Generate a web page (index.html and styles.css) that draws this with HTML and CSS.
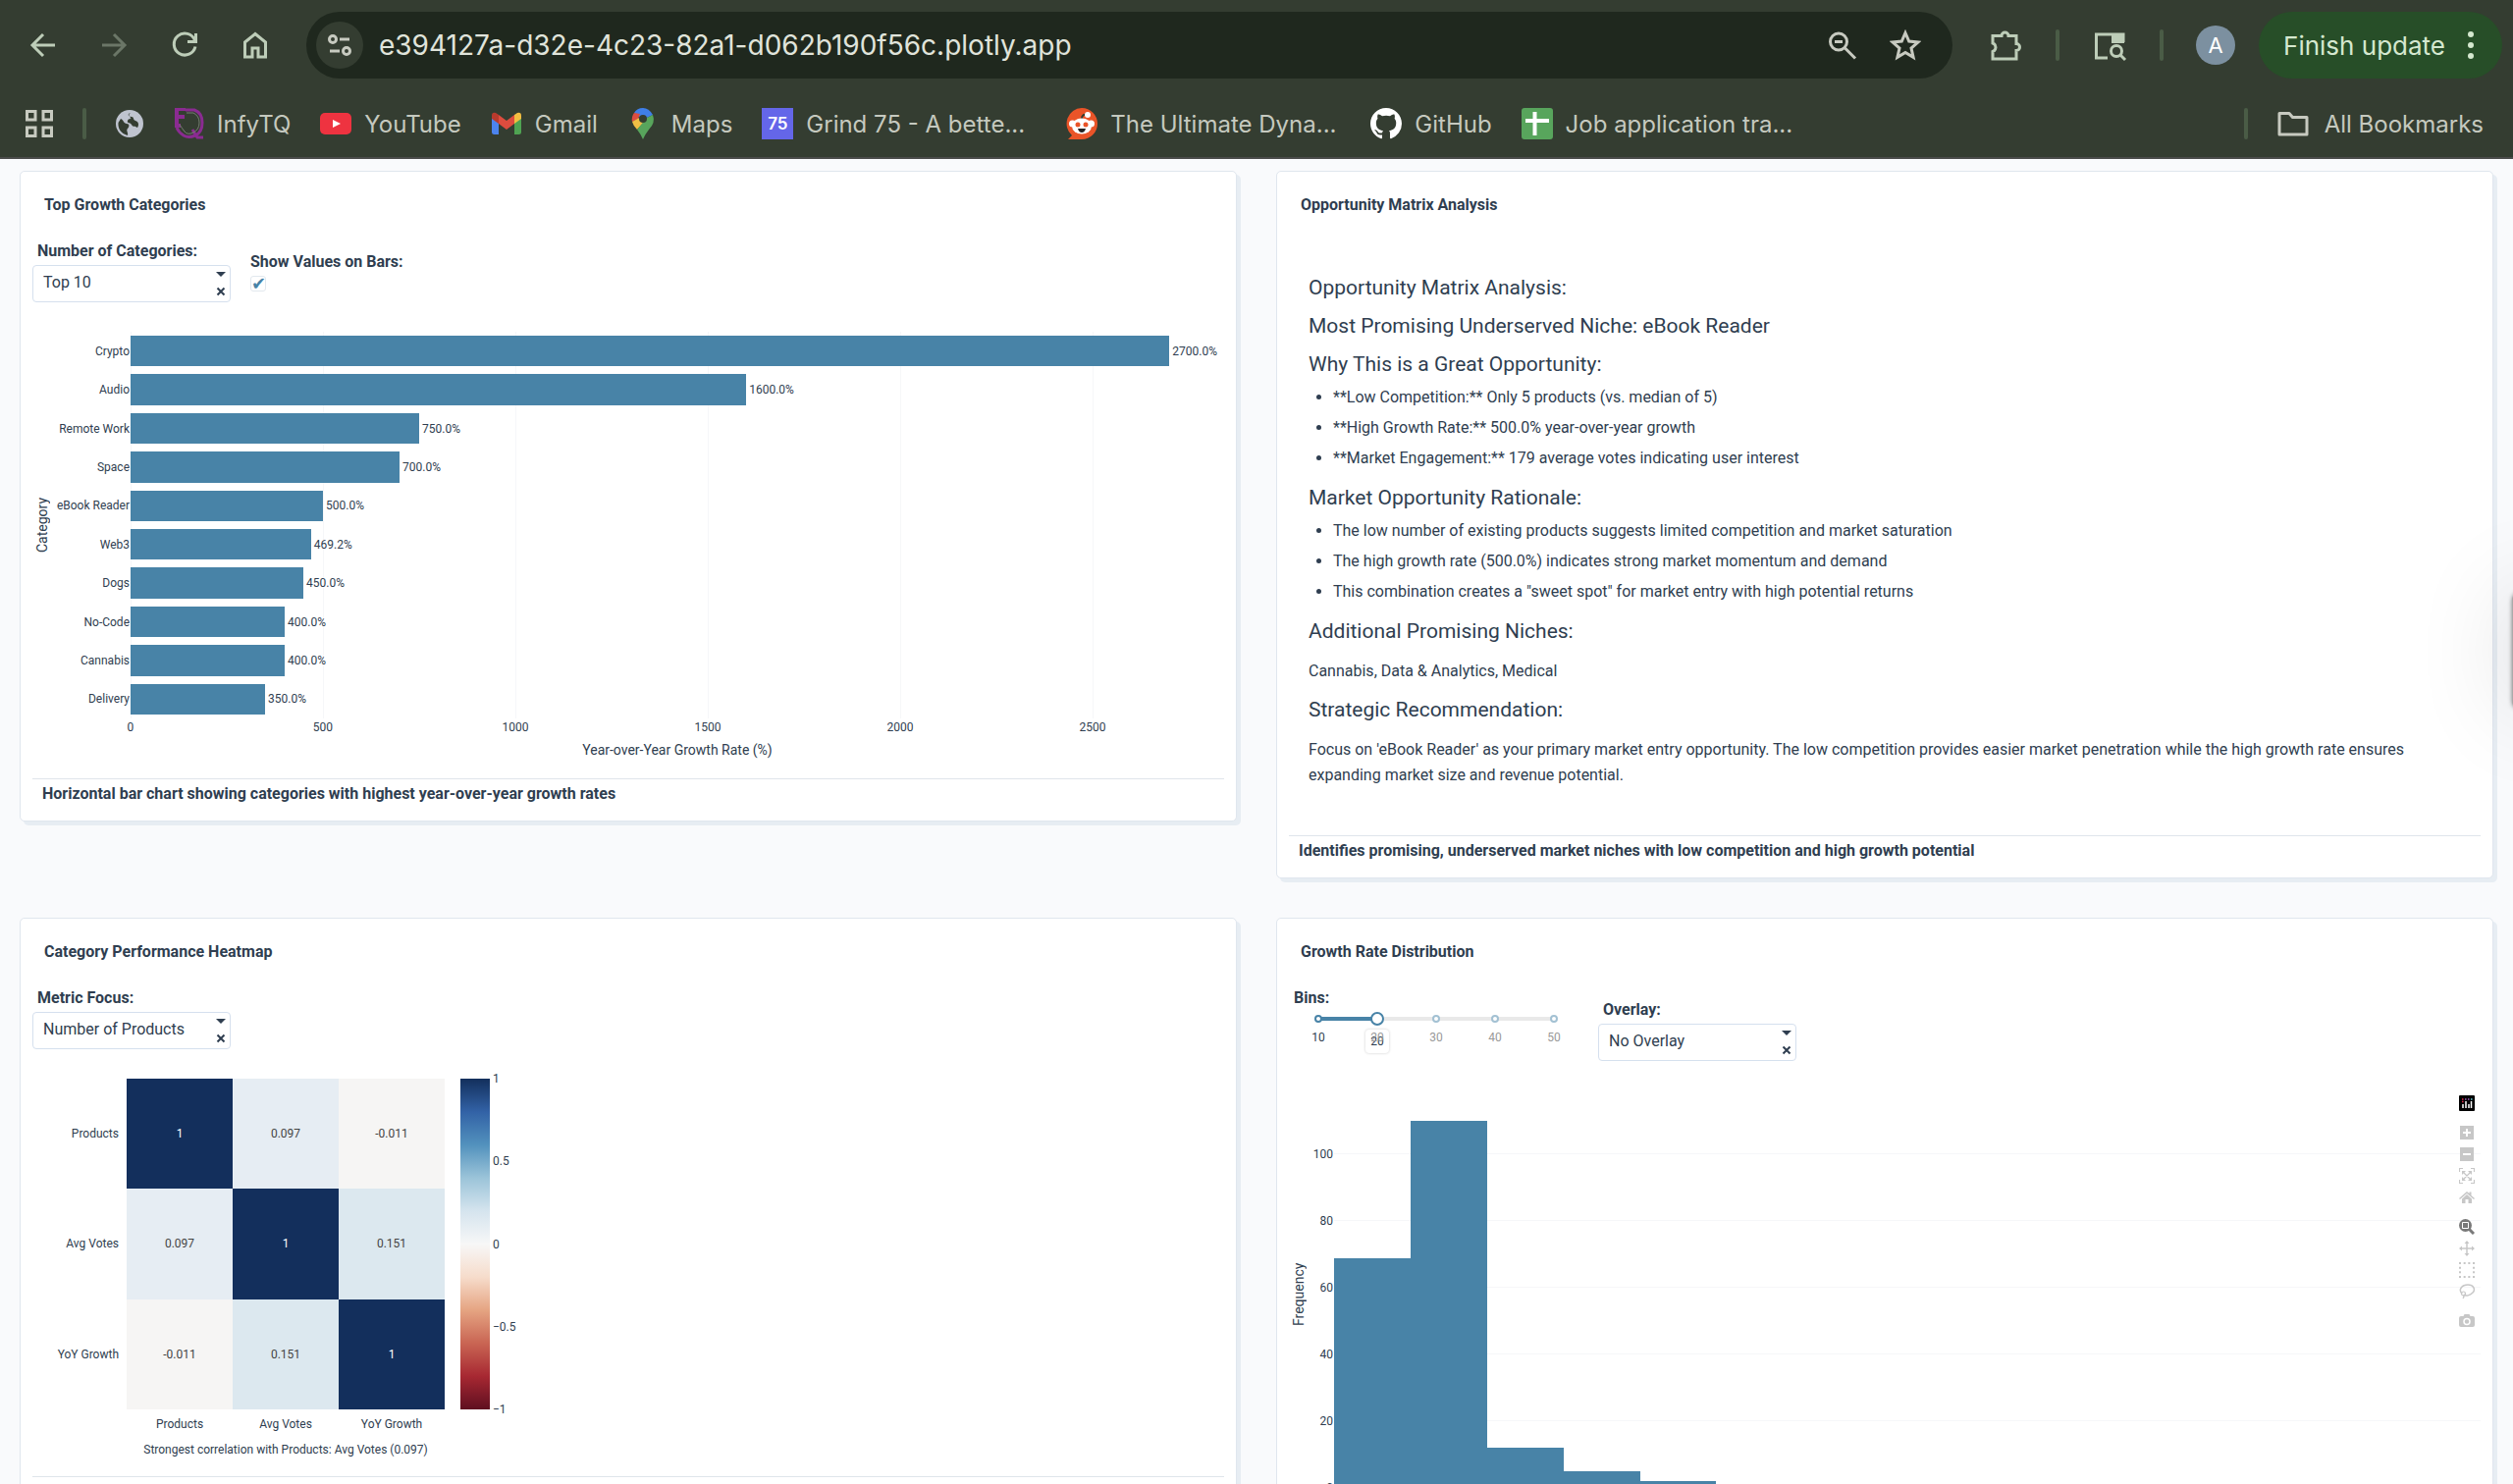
FILE: index.html
```html
<!DOCTYPE html>
<html lang="en">
<head>
    <meta charset="UTF-8">
    <meta name="viewport" content="width=device-width, initial-scale=1.0">
    <title>Product Analytics Dashboard</title>
    <link rel="stylesheet" href="styles.css">
</head>
<body>
    <header class="browser">
        <div class="toolbar">
            <nav class="nav-buttons">
                <button type="button" class="icon-btn" aria-label="Back"><svg viewBox="0 0 32 32" width="32" height="32"><path d="M28 16H5M16 5L5 16l11 11"/></svg></button>
                <button type="button" class="icon-btn dim" aria-label="Forward"><svg viewBox="0 0 32 32" width="32" height="32"><path d="M4 16h23M16 5l11 11-11 11"/></svg></button>
                <button type="button" class="icon-btn" aria-label="Reload"><svg viewBox="0 0 32 32" width="32" height="32"><path d="M26.500 11A11 11 0 1 0 27 17.500"/><path d="M27.500 4v8.500H19"/></svg></button>
                <button type="button" class="icon-btn" aria-label="Home"><svg viewBox="0 0 32 32" width="32" height="32"><path d="M5.500 13L16 4.500 26.500 13v15h-7.500v-9h-6v9H5.500z"/></svg></button>
            </nav>
            <div class="omnibox">
                <button type="button" class="site-info" aria-label="Site information"><svg viewBox="0 0 28 28" width="28" height="28"><circle cx="7" cy="8" r="3.500"/><path d="M14 8h10M4 20h10"/><circle cx="21" cy="20" r="3.500"/></svg></button>
                <input type="text" class="address" aria-label="Address" value="e394127a-d32e-4c23-82a1-d062b190f56c.plotly.app">
                <button type="button" class="icon-btn pale" aria-label="Zoom"><svg viewBox="0 0 32 32" width="32" height="32"><circle cx="12" cy="12.500" r="8.500"/><path d="M18.500 19l10.500 10.500M8 12.500h8"/></svg></button>
                <button type="button" class="icon-btn pale" aria-label="Bookmark this tab"><svg viewBox="0 0 32 32" width="32" height="32"><path d="M16 3.500l3.700 8.600 9.300.8-7 6.200 2.100 9.200-8.100-4.900-8.100 4.900L10 19.100l-7-6.200 9.300-.8z"/></svg></button>
            </div>
            <div class="tools">
                <button type="button" class="icon-btn" aria-label="Extensions"><svg viewBox="0 0 36 36" width="36" height="36"><path d="M5 8.500h9a3.500 3.500 0 1 1 7 0h8v8a3.500 3.500 0 1 1 0 7V32H5v-7.500a4.500 4.500 0 0 0 0-8.500z"/></svg></button>
                <span class="bar-divider"></span>
                <button type="button" class="icon-btn" aria-label="Search side panel"><svg viewBox="0 0 36 36" width="36" height="36"><path d="M16 31H4.500V7H32v8"/><path d="M20 6h13v10H20z" class="solid"/><circle cx="25" cy="24" r="5.500"/><path d="M29 28l5 5"/></svg></button>
                <span class="bar-divider"></span>
                <button type="button" class="avatar" aria-label="Profile">A</button>
                <button type="button" class="update">Finish update<svg viewBox="0 0 8 28" width="8" height="28"><circle cx="4" cy="3" r="3"/><circle cx="4" cy="14" r="3"/><circle cx="4" cy="25" r="3"/></svg></button>
            </div>
        </div>
        <nav class="bookmarks">
            <a href="#" class="bookmark" aria-label="Apps"><svg viewBox="0 0 28 28" width="28" height="28" class="line"><path d="M1.500 1.500h8.500V10H1.500zM18 1.500h8.500V10H18zM1.500 18h8.500v8.500H1.500zM18 18h8.500v8.500H18z"/></svg></a>
            <span class="bar-divider"></span>
            <a href="#" class="bookmark" aria-label="Website"><svg viewBox="0 0 28 28" width="28" height="28"><circle cx="14" cy="14" r="14" fill="#bfc4cf"/><path d="M5 9c3 1 3 5 6 5s3 3 1 5 1 4 0 7C5 24 2 19 2.500 13zM15 3c-4 1-2 4 1 4s1 3 4 4 4 4 2 7c-3-2-4 0-6-3s-5-1-4-4 4-1 3-3-3-3 0-5z" fill="#343d31"/></svg></a>
            <a href="#" class="bookmark"><svg viewBox="0 0 32 32" width="32" height="32"><path d="M2 1h11M4 1v17M2 18h6M4 9h8" stroke="#8a2b91" stroke-width="4" fill="none"/><path d="M13 2h9q8 3 8 13t-7 13-12 0-7-8" stroke="#8a2b91" stroke-width="3" fill="none"/><path d="M20 22l5 8h6" stroke="#8a2b91" stroke-width="3" fill="none"/><path d="M14 5h7q6 3 6 10t-6 10-9-1-5-7" stroke="#777c73" stroke-width="1" fill="none"/></svg>InfyTQ</a>
            <a href="#" class="bookmark"><svg viewBox="0 0 32 32" width="32" height="32"><rect y="5" width="32" height="22" rx="5" fill="#ee3340"/><path d="M13 12l8 4-8 4z" fill="#fff"/></svg>YouTube</a>
            <a href="#" class="bookmark"><svg viewBox="0 0 32 32" width="32" height="32"><path d="M1 9l7 5v13H3.500Q1 27 1 25z" fill="#4c84ee"/><path d="M31 9l-7 5v13h4.500Q31 27 31 25z" fill="#4fa352"/><path d="M24 7l3-2q4-1 4 3v3l-7 5z" fill="#f2bd41"/><path d="M1 11V8q0-4 4-3l3 2v9z" fill="#b93a2d"/><path d="M8 7l8 6 8-6v9l-8 6-8-6z" fill="#dd4c3e"/></svg>Gmail</a>
            <a href="#" class="bookmark"><svg viewBox="0 0 32 32" width="32" height="32"><path d="M7 5Q10 0 16 0t10 7L16 12z" fill="#3f7fe8"/><path d="M7 5Q4 9 5 14l6-3 2-5z" fill="#dc4c41"/><path d="M5 14q1 4 5 8l9-10-5-3z" fill="#f0bf45"/><path d="M26 7q3 8-4 15-4 5-6 10-2-5-6-10l10-12z" fill="#58a55c"/><circle cx="16" cy="11" r="4" fill="#343d31"/></svg>Maps</a>
            <a href="#" class="bookmark cut"><span class="badge75">75</span>Grind 75 - A bette...</a>
            <a href="#" class="bookmark cut"><svg viewBox="0 0 32 32" width="32" height="32"><path d="M16 0a16 16 0 1 1 0 32H2l4-4A16 16 0 0 1 16 0z" fill="#ea5428"/><path d="M16 11q0-5 5-4" stroke="#343d31" stroke-width="2" fill="none"/><circle cx="22" cy="7" r="3" fill="#fff"/><circle cx="6.500" cy="16" r="3.500" fill="#fff"/><circle cx="25.500" cy="16" r="3.500" fill="#fff"/><ellipse cx="16" cy="18.500" rx="10" ry="8" fill="#fff"/><circle cx="12" cy="17" r="2.500" fill="#ea5428"/><circle cx="20" cy="17" r="2.500" fill="#ea5428"/><path d="M12 21h8q-1 4-4 4t-4-4z" fill="#222"/></svg>The Ultimate Dyna...</a>
            <a href="#" class="bookmark"><svg viewBox="0 0 16 16" width="32" height="32"><path fill="#fff" d="M8 0C3.580 0 0 3.580 0 8c0 3.540 2.290 6.530 5.470 7.590.4.070.55-.17.55-.38 0-.19-.01-.82-.01-1.490-2.010.37-2.530-.49-2.690-.94-.09-.23-.48-.94-.82-1.130-.28-.15-.68-.52-.01-.53.63-.01 1.080.58 1.230.82.72 1.210 1.870.87 2.330.66.070-.52.28-.87.51-1.070-1.780-.2-3.640-.89-3.640-3.950 0-.87.31-1.590.82-2.150-.08-.2-.36-1.020.08-2.120 0 0 .67-.21 2.200.82.64-.18 1.320-.27 2-.27s1.360.09 2 .27c1.530-1.040 2.200-.82 2.200-.82.44 1.100.16 1.920.08 2.120.51.56.82 1.270.82 2.150 0 3.070-1.870 3.750-3.650 3.950.29.25.54.73.54 1.480 0 1.070-.01 1.930-.01 2.200 0 .21.15.46.55.38A8.010 8.010 0 0 0 16 8c0-4.420-3.580-8-8-8z"/></svg>GitHub</a>
            <a href="#" class="bookmark cut"><svg viewBox="0 0 32 32" width="32" height="32"><rect width="32" height="32" rx="3" fill="#58a55c"/><path d="M13.500 4v24M4 13h24" stroke="#fff" stroke-width="4"/></svg>Job application tra...</a>
            <span class="bar-divider push"></span>
            <a href="#" class="bookmark folder"><svg viewBox="0 0 32 32" width="32" height="32" class="line"><path d="M2 5.500h10l3.500 4H30V27H2z" stroke-linejoin="round"/></svg>All Bookmarks</a>
        </nav>
    </header>

    <main class="dashboard">
        <!-- Top growth categories -->
        <section class="card">
            <h2 class="card-title">Top Growth Categories</h2>
            <div class="controls">
                <div class="control">
                    <label for="top-n">Number of Categories:</label>
                    <div class="dropdown">
                        <select id="top-n"><option>Top 10</option></select>
                        <svg class="dropdown-icons" viewBox="0 0 10 28" width="10" height="28"><path d="M0 1h10L5 6z" class="caret"/><path d="M1.500 17.500l7 7m0-7l-7 7" class="cross"/></svg>
                    </div>
                </div>
                <div class="control">
                    <label for="show-values">Show Values on Bars:</label>
                    <input type="checkbox" id="show-values" class="check" checked>
                </div>
            </div>
            <div class="bar-chart">
                <div class="y-title">Category</div>
                <div class="bar-names">
                    <span>Crypto</span><span>Audio</span><span>Remote Work</span><span>Space</span><span>eBook Reader</span><span>Web3</span><span>Dogs</span><span>No-Code</span><span>Cannabis</span><span>Delivery</span>
                </div>
                <div class="bar-plot">
                    <div class="bar-row"><div class="bar" style="width:95%"></div>2700.0%</div>
                    <div class="bar-row"><div class="bar" style="width:56.3%"></div>1600.0%</div>
                    <div class="bar-row"><div class="bar" style="width:26.4%"></div>750.0%</div>
                    <div class="bar-row"><div class="bar" style="width:24.6%"></div>700.0%</div>
                    <div class="bar-row"><div class="bar" style="width:17.6%"></div>500.0%</div>
                    <div class="bar-row"><div class="bar" style="width:16.5%"></div>469.2%</div>
                    <div class="bar-row"><div class="bar" style="width:15.8%"></div>450.0%</div>
                    <div class="bar-row"><div class="bar" style="width:14.1%"></div>400.0%</div>
                    <div class="bar-row"><div class="bar" style="width:14.1%"></div>400.0%</div>
                    <div class="bar-row"><div class="bar" style="width:12.3%"></div>350.0%</div>
                </div>
                <div class="x-ticks"><span>0</span><span>500</span><span>1000</span><span>1500</span><span>2000</span><span>2500</span></div>
                <div class="x-title">Year-over-Year Growth Rate (%)</div>
            </div>
            <p class="card-note">Horizontal bar chart showing categories with highest year-over-year growth rates</p>
        </section>

        <!-- Opportunity matrix -->
        <section class="card">
            <h2 class="card-title">Opportunity Matrix Analysis</h2>
            <div class="analysis">
                <h3>Opportunity Matrix Analysis:</h3>
                <h3>Most Promising Underserved Niche: eBook Reader</h3>
                <h3>Why This is a Great Opportunity:</h3>
                <ul>
                    <li>**Low Competition:** Only 5 products (vs. median of 5)</li>
                    <li>**High Growth Rate:** 500.0% year-over-year growth</li>
                    <li>**Market Engagement:** 179 average votes indicating user interest</li>
                </ul>
                <h3>Market Opportunity Rationale:</h3>
                <ul>
                    <li>The low number of existing products suggests limited competition and market saturation</li>
                    <li>The high growth rate (500.0%) indicates strong market momentum and demand</li>
                    <li>This combination creates a "sweet spot" for market entry with high potential returns</li>
                </ul>
                <h3>Additional Promising Niches:</h3>
                <p>Cannabis, Data &amp; Analytics, Medical</p>
                <h3>Strategic Recommendation:</h3>
                <p>Focus on 'eBook Reader' as your primary market entry opportunity. The low competition provides easier market penetration while the high growth rate ensures expanding market size and revenue potential.</p>
            </div>
            <p class="card-note">Identifies promising, underserved market niches with low competition and high growth potential</p>
        </section>

        <!-- Correlation heatmap -->
        <section class="card">
            <h2 class="card-title">Category Performance Heatmap</h2>
            <div class="controls">
                <div class="control">
                    <label for="metric">Metric Focus:</label>
                    <div class="dropdown">
                        <select id="metric"><option>Number of Products</option></select>
                        <svg class="dropdown-icons" viewBox="0 0 10 28" width="10" height="28"><path d="M0 1h10L5 6z" class="caret"/><path d="M1.500 17.500l7 7m0-7l-7 7" class="cross"/></svg>
                    </div>
                </div>
            </div>
            <div class="heatmap">
                <div class="heat-y"><span>Products</span><span>Avg Votes</span><span>YoY Growth</span></div>
                <div class="heat-cells">
                    <span class="full">1</span><span class="low">0.097</span><span class="none">-0.011</span>
                    <span class="low">0.097</span><span class="full">1</span><span class="mid">0.151</span>
                    <span class="none">-0.011</span><span class="mid">0.151</span><span class="full">1</span>
                </div>
                <div class="colorbar"></div>
                <div class="colorbar-ticks"><span>1</span><span>0.5</span><span>0</span><span>−0.5</span><span>−1</span></div>
                <div class="heat-x"><span>Products</span><span>Avg Votes</span><span>YoY Growth</span></div>
                <div class="heat-note">Strongest correlation with Products: Avg Votes (0.097)</div>
            </div>
            <p class="card-note"></p>
        </section>

        <!-- Growth rate histogram -->
        <section class="card">
            <h2 class="card-title">Growth Rate Distribution</h2>
            <div class="controls">
                <div class="control bins">
                    <label for="bins">Bins:</label>
                    <div class="slider">
                        <div class="slider-dots"><i class="on"></i><i class="on"></i><i></i><i></i><i></i></div>
                        <input type="range" id="bins" min="10" max="50" step="10" value="20">
                        <output class="slider-tip" for="bins">20</output>
                        <div class="slider-marks"><span class="on">10</span><span>20</span><span>30</span><span>40</span><span>50</span></div>
                    </div>
                </div>
                <div class="control">
                    <label for="overlay">Overlay:</label>
                    <div class="dropdown">
                        <select id="overlay"><option>No Overlay</option></select>
                        <svg class="dropdown-icons" viewBox="0 0 10 28" width="10" height="28"><path d="M0 1h10L5 6z" class="caret"/><path d="M1.500 17.500l7 7m0-7l-7 7" class="cross"/></svg>
                    </div>
                </div>
            </div>
            <div class="histogram">
                <div class="y-title">Frequency</div>
                <div class="hist-ticks"><span>100</span><span>80</span><span>60</span><span>40</span><span>20</span><span>0</span></div>
                <div class="hist-plot">
                    <div class="hist-bar" style="height:234px"></div>
                    <div class="hist-bar" style="height:374px"></div>
                    <div class="hist-bar" style="height:41px"></div>
                    <div class="hist-bar" style="height:17px"></div>
                    <div class="hist-bar" style="height:7px"></div>
                </div>
                <div class="modebar">
                    <div class="mode-group"><a href="#" aria-label="Produced with Plotly"><svg viewBox="0 0 16 16" width="16" height="16"><rect width="16" height="16" rx="1" fill="#000"/><path d="M4 9v4M7 6v7M10 9v4M12.500 6v7" stroke="#fff" stroke-width="1.500"/><path d="M3 4h1.500M3 6.500h1.500" stroke="#e6294b" stroke-width="1.300"/><path d="M6 4h1.500M9 4h1.500" stroke="#a05cc0" stroke-width="1.300"/><path d="M12 4h1.500" stroke="#6fd3e0" stroke-width="1.300"/></svg></a></div>
                    <div class="mode-group">
                        <button type="button" aria-label="Zoom in"><svg viewBox="0 0 16 16" width="16" height="16"><path d="M1 1h14v14H1z"/><path d="M8 4v8M4 8h8" stroke="#fff" stroke-width="2"/></svg></button>
                        <button type="button" aria-label="Zoom out"><svg viewBox="0 0 16 16" width="16" height="16"><path d="M1 1h14v14H1z"/><path d="M4 8h8" stroke="#fff" stroke-width="2"/></svg></button>
                        <button type="button" aria-label="Autoscale"><svg viewBox="0 0 16 16" width="16" height="16"><path d="M.5 4V.5H4M12 .5h3.500V4M15.500 12v3.500H12M4 15.500H.5V12M4 4l8 8M12 4l-8 8" fill="none" stroke="#c7c7c7" stroke-width="1.200"/><path d="M3 3h4L3 7zM13 3v4L9 3zM3 13V9l4 4zM13 13H9l4-4z"/></svg></button>
                        <button type="button" aria-label="Reset axes"><svg viewBox="0 0 16 16" width="16" height="16"><path d="M8 2l2.500 2V2.500h2v3.500L16 9l-1 1-7-6-7 6-1-1zM8 5l5 4.500V14H9.500v-4h-3v4H3V9.500z"/></svg></button>
                    </div>
                    <div class="mode-group">
                        <button type="button" class="active" aria-label="Zoom"><svg viewBox="0 0 16 16" width="16" height="16"><circle cx="6.500" cy="6.500" r="6.500"/><path d="M10 10l5 5" stroke="#797979" stroke-width="3"/><path d="M3.500 3.500h6v6h-6z" stroke="#fff"/></svg></button>
                        <button type="button" aria-label="Pan"><svg viewBox="0 0 16 16" width="16" height="16"><path d="M8 1v14M1 8h14" stroke="#c7c7c7" stroke-width="1.500"/><path d="M8 0l2.500 3h-5zM8 16l-2.500-3h5zM0 8l3-2.500v5zM16 8l-3 2.500v-5z"/></svg></button>
                        <button type="button" aria-label="Box select"><svg viewBox="0 0 16 16" width="16" height="16"><path d="M1 1h14v14H1z" fill="none" stroke="#c7c7c7" stroke-width="2" stroke-dasharray="2 2.667" stroke-dashoffset="1"/></svg></button>
                        <button type="button" aria-label="Lasso select"><svg viewBox="0 0 16 16" width="16" height="16"><path d="M3 10C-1 6 3 1 9 1s8 5 5 8-7 4-9 2" fill="none" stroke="#c7c7c7" stroke-width="1.500"/><circle cx="4.500" cy="10" r="2" fill="none" stroke="#c7c7c7" stroke-width="1.200"/><path d="M4 12q2 0 0 3" fill="none" stroke="#c7c7c7" stroke-width="1.300"/></svg></button>
                    </div>
                    <div class="mode-group"><button type="button" aria-label="Download plot"><svg viewBox="0 0 16 16" width="16" height="16"><path d="M2 3h2.500l1-2h5l1 2H14q2 0 2 2v7q0 2-2 2H2q-2 0-2-2V5q0-2 2-2z"/><circle cx="8" cy="8.500" r="3" fill="#c7c7c7" stroke="#fff" stroke-width="1.500"/></svg></button></div>
                </div>
            </div>
        </section>
    </main>
    <div class="edge-panel"></div>
</body>
</html>
```
FILE: styles.css
```css
* {
    box-sizing: border-box;
}

body {
    margin: 0;
    height: 100vh;
    overflow: hidden;
    position: relative;
    background: #f9fafc;
    color: #2f3e50;
    font-family: Roboto, "Open Sans", sans-serif;
    font-size: 16px;
}

button, input, select {
    font: inherit;
    color: inherit;
}

button {
    background: none;
    border: none;
    padding: 0;
}

svg {
    display: block;
    flex: none;
}

/* Browser bar */
.browser {
    height: 162px;
    background: #343d31;
    border-bottom: 2px solid #4a4b4a;
    font-family: Inter, "Liberation Sans", sans-serif;
    color: #c5c9bf;
}

.toolbar {
    display: flex;
    align-items: center;
    height: 92px;
    padding: 0 11px 0 28px;
}

.nav-buttons {
    display: flex;
    gap: 40px;
    margin-right: 36px;
}

.icon-btn svg, .site-info svg, .line {
    fill: none;
    stroke: #bdcdb8;
    stroke-width: 3;
}

.icon-btn .solid {
    fill: #bdcdb8;
    stroke: none;
}

.dim {
    opacity: 0.4;
}

.icon-btn.pale svg, .line, .site-info svg {
    stroke: #c7cac0;
}

.omnibox {
    flex: 1;
    display: flex;
    align-items: center;
    gap: 32px;
    height: 68px;
    padding: 0 32px 0 10px;
    border-radius: 34px;
    background: #1f281e;
}

.site-info {
    width: 48px;
    height: 48px;
    border-radius: 50%;
    background: #343d31;
    display: flex;
    align-items: center;
    justify-content: center;
}

.address {
    flex: 1;
    margin-left: -16px;
    padding: 0;
    border: none;
    background: none;
    color: #e0e4db;
    font-size: 28px;
}

.tools {
    display: flex;
    align-items: center;
    margin-left: 36px;
    gap: 33px;
}

.bar-divider {
    width: 4px;
    height: 32px;
    border-radius: 2px;
    background: #4a5c46;
}

.avatar {
    width: 40px;
    height: 40px;
    border-radius: 50%;
    background: #7c90a0;
    color: #fff;
    font-size: 22px;
}

.update {
    display: flex;
    align-items: center;
    gap: 22px;
    height: 68px;
    margin-left: -9px;
    padding: 0 28px 0 25px;
    border-radius: 34px;
    background: #274e28;
    color: #d5e8cf;
    font-size: 26px;
}

.update svg {
    fill: #d5e8cf;
}

.bookmarks {
    display: flex;
    align-items: center;
    gap: 30px;
    height: 68px;
    padding: 0 30px 0 26px;
    font-size: 24px;
}

.bookmark {
    display: flex;
    align-items: center;
    gap: 13px;
    color: inherit;
    text-decoration: none;
    white-space: nowrap;
}

/* long names are cut to one shared width */
.cut {
    width: 280px;
}

.badge75 {
    width: 32px;
    height: 32px;
    background: #6466e9;
    color: #fff;
    font-size: 17px;
    font-weight: 600;
    line-height: 32px;
    text-align: center;
}

.push {
    margin-left: auto;
}

.folder {
    gap: 16px;
}

/* Dashboard */
.dashboard {
    display: grid;
    grid-template-columns: 1fr 1fr;
    align-items: start;
    gap: 40px;
    padding: 12px 20px;
}

.card {
    padding: 12px;
    background: #fff;
    border: 1px solid #e0e6ee;
    border-radius: 5px;
    box-shadow: 4px 4px 0 #e7edf3;
}

.card-title {
    margin: 0;
    padding: 12px;
    font-size: 16px;
    font-weight: 700;
    line-height: 20px;
}

.card-note {
    margin: 0;
    padding: 5px 10px;
    min-height: 31px;
    border-top: 1px solid #dfe5eb;
    font-weight: 700;
    line-height: 20px;
}

.controls {
    display: flex;
    align-items: center;
    gap: 20px;
    margin: 15px 0 30px;
}

.control {
    display: flex;
    flex-direction: column;
    gap: 4px;
}

.control label {
    font-weight: 700;
    line-height: 20px;
}

.dropdown {
    position: relative;
    width: 202px;
}

.dropdown select {
    display: block;
    width: 100%;
    height: 38px;
    padding: 0 10px 3px;
    appearance: none;
    background: #fff;
    border: 1px solid #d5e0ee;
    border-radius: 4px;
}

.control:has(.dropdown) label {
    padding-left: 5px;
}

.dropdown-icons {
    position: absolute;
    right: 5px;
    top: 6px;
    pointer-events: none;
}

.caret {
    fill: #2f3e50;
}

.cross {
    fill: none;
    stroke: #2f3e50;
    stroke-width: 2;
}

.check {
    appearance: none;
    width: 16px;
    height: 16px;
    margin: 0;
    border: 1px solid #e2e8ee;
    border-radius: 3px;
    color: #4883a7;
}

.check:checked::before {
    content: "✔";
    display: block;
    font: 18px/14px "DejaVu Sans", sans-serif;
}

/* Opportunity text */
.analysis {
    padding: 36px 20px 48px;
    line-height: 26px;
}

.analysis h3 {
    margin: 13px 0;
    font-size: 21px;
    font-weight: 400;
}

.analysis ul {
    display: grid;
    gap: 5px;
    margin: -5px 0 14px;
    padding-left: 25px;
}

.analysis p {
    margin: 15px 0 0;
}

/* Charts */
.y-title {
    writing-mode: vertical-rl;
    transform: rotate(180deg);
    text-align: center;
    font-size: 14px;
    line-height: 20px;
}

.bar-chart {
    display: grid;
    grid-template-columns: 20px 80px 1fr;
    grid-template-rows: 394px 18px 28px;
    font-size: 12px;
    margin-bottom: 15px;
}

.bar-names {
    display: flex;
    flex-direction: column;
    padding-right: 1px;
    text-align: right;
    white-space: nowrap;
}

.bar-names span {
    flex: 1;
    display: flex;
    align-items: center;
    justify-content: flex-end;
}

.bar-plot {
    display: flex;
    flex-direction: column;
    background: repeating-linear-gradient(90deg, #f6f7f9 0 1px, transparent 1px 17.593%);
}

.bar-row {
    flex: 1;
    display: flex;
    align-items: center;
    gap: 3px;
}

.bar {
    height: 80%;
    flex: none;
    background: #4883a7;
}

.x-ticks {
    grid-column: 3;
    display: grid;
    grid-template-columns: repeat(6, 17.593%);
    line-height: 18px;
    text-align: center;
}

/* each label is centred on its gridline */
.x-ticks span {
    transform: translateX(-50%);
}

.x-title {
    grid-column: 3;
    text-align: center;
    font-size: 14px;
    line-height: 28px;
}

.heatmap {
    display: grid;
    grid-template-columns: 96px 324px 46px auto;
    grid-template-rows: 337px 30px 22px;
    font-size: 12px;
    margin-bottom: 16px;
}

.heat-y {
    display: flex;
    flex-direction: column;
    padding-right: 8px;
}

.heat-y span {
    flex: 1;
    display: flex;
    align-items: center;
    justify-content: flex-end;
}

.heat-cells {
    display: grid;
    grid-template-columns: repeat(3, 1fr);
    color: #444;
}

.heat-cells span {
    display: flex;
    align-items: center;
    justify-content: center;
}

.heat-cells .full {
    background: #132f5c;
    color: #fff;
}

.heat-cells .low {
    background: #e6edf3;
}

.heat-cells .mid {
    background: #dce8ef;
}

.heat-cells .none {
    background: #f6f5f4;
}

.colorbar {
    margin-left: 16px;
    background: linear-gradient(#132f5c, #3262a6 10%, #5291bd 20%, #9bc4d9 30%, #d5e4ee 40%, #f7f7f7 50%, #f6dccb 60%, #e5a482 70%, #c96553 80%, #a72832 90%, #5f0f20);
}

.colorbar-ticks {
    display: flex;
    flex-direction: column;
    justify-content: space-between;
    margin: -7px 0;
    padding-left: 3px;
    line-height: 14px;
}

.heat-x {
    grid-column: 2;
    display: grid;
    grid-template-columns: repeat(3, 1fr);
    line-height: 30px;
    text-align: center;
}

.heat-note {
    grid-column: 2;
    grid-row: 3;
    line-height: 22px;
    text-align: center;
}

/* Slider */
.bins {
    height: 85px;
    padding-left: 5px;
    width: 295px;
}

.slider {
    position: relative;
    width: 240px;
    margin-left: 25px;
    font-size: 12px;
}

.slider input {
    position: relative;
    appearance: none;
    display: block;
    width: 254px;
    height: 14px;
    margin: 0 -7px;
    background: none;
}

.slider input::-webkit-slider-thumb {
    appearance: none;
    width: 14px;
    height: 14px;
    border: 2px solid #4883a7;
    border-radius: 50%;
    background: #fff;
}

.slider-dots {
    position: absolute;
    top: 5px;
    left: 0;
    right: 0;
    height: 4px;
    display: flex;
    align-items: center;
    justify-content: space-between;
    background: linear-gradient(90deg, #4883a7 25%, #e9e9e9 25%);
}

.slider-dots i {
    width: 8px;
    height: 8px;
    margin: 0 -4px;
    border: 2px solid #a3c1d3;
    border-radius: 50%;
    background: #fff;
}

.slider-dots .on {
    border-color: #4883a7;
}

.slider-marks {
    position: relative;
    display: flex;
    justify-content: space-between;
    margin: 4px -10px 0;
    line-height: 16px;
    color: #999;
}

.slider-marks span {
    width: 20px;
    text-align: center;
}

.slider-marks .on {
    color: #2f3e50;
}

.slider-tip {
    position: absolute;
    top: 18px;
    left: 25%;
    width: 24px;
    height: 24px;
    margin-left: -12px;
    background: #fff;
    border-radius: 4px;
    box-shadow: 0 0 3px rgba(0, 0, 0, 0.2);
    line-height: 24px;
    text-align: center;
}

.histogram {
    position: relative;
    display: grid;
    grid-template-columns: 20px 26px 1fr;
    grid-template-rows: 394px;
    font-size: 12px;
}

.hist-ticks {
    display: flex;
    flex-direction: column;
    justify-content: flex-end;
    gap: 52px;
    margin-bottom: -8px;
    padding-right: 1px;
    line-height: 16px;
    text-align: right;
}

.hist-plot {
    display: flex;
    align-items: flex-end;
    background: repeating-linear-gradient(0deg, #f6f7f9 0 1px, transparent 1px 68px);
}

.hist-bar {
    width: 6.67%;
    background: #4883a7;
}

.modebar {
    position: absolute;
    top: -6px;
    right: 6px;
    display: flex;
    flex-direction: column;
    gap: 14px;
}

.mode-group {
    display: flex;
    flex-direction: column;
    gap: 6px;
}

.modebar svg {
    fill: #c7c7c7;
}

.modebar .active svg {
    fill: #797979;
}

/* Collapsed panel peeking in from the right edge */
.edge-panel {
    position: absolute;
    top: 602px;
    right: -59px;
    width: 60px;
    height: 122px;
    border-radius: 10px;
    background: #aaa;
    box-shadow: 0 0 4px rgba(0, 0, 0, 0.5), 0 0 100px rgba(0, 0, 0, 0.14);
}
```
